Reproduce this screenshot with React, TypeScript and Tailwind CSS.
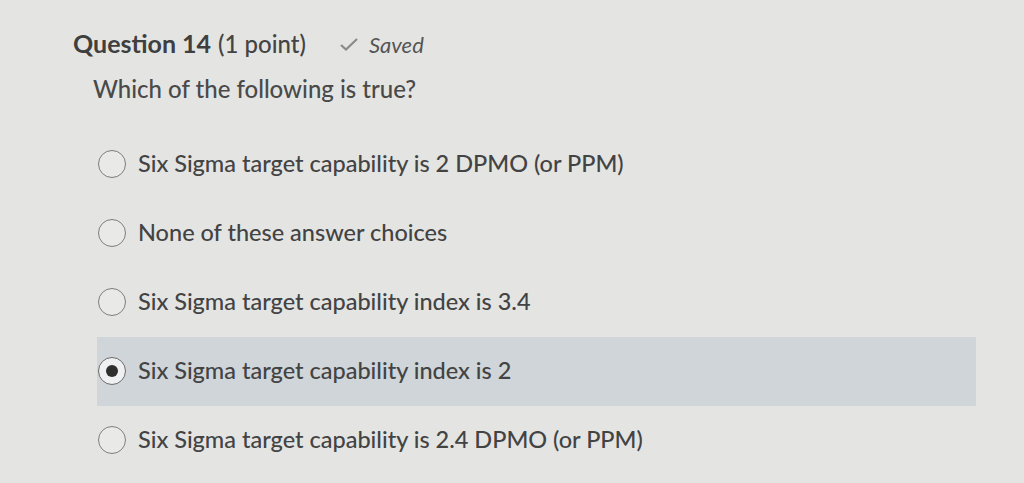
const options = [
  'Six Sigma target capability is 2 DPMO (or PPM)',
  'None of these answer choices',
  'Six Sigma target capability index is 3.4',
  'Six Sigma target capability index is 2',
  'Six Sigma target capability is 2.4 DPMO (or PPM)',
]

const selected = 3

function Radio({ checked }: { checked: boolean }) {
  return (
    <span
      className={`flex h-[28px] w-[28px] shrink-0 items-center justify-center rounded-full border-[1.5px] ${
        checked ? 'border-[#6b6b6b] bg-[#eef0f1]' : 'border-[#7d7d7d] bg-[#e9e9e7]'
      }`}
    >
      {checked && <span className="h-[12px] w-[12px] rounded-full bg-[#2f2f2f]" />}
    </span>
  )
}

export default function App() {
  return (
    <div
      className="h-[483px] w-[1024px] overflow-hidden bg-[#e4e5e3] text-[#474747]"
      style={{ fontFamily: 'Lato, "Open Sans", sans-serif' }}
    >
      <div className="pl-[73px] pt-[25px]">
        <div className="flex items-baseline">
          <span className="text-[25px] font-bold text-[#3f3f3f]">Question 14</span>
          <span className="ml-[7px] text-[24px] font-medium text-[#444]">(1 point)</span>
          <span className="ml-[33px] flex items-baseline text-[22px] italic text-[#555]">
            <svg width="20" height="15" viewBox="0 0 20 15" className="mr-[10px] self-center">
              <path d="M2 8 L7 12.5 L18 2" fill="none" stroke="#8a8a8a" strokeWidth="2.2" />
            </svg>
            Saved
          </span>
        </div>
        <div className="ml-[20px] mt-[8px] text-[24px] font-medium text-[#4a4a4a]">Which of the following is true?</div>
      </div>

      <div className="ml-[97px] mt-[23px] w-[879px]">
        {options.map((opt, i) => (
          <div
            key={opt}
            className={`flex h-[69px] items-center gap-[12px] pl-[1px] ${i === selected ? 'bg-[#cfd5d9]' : ''}`}
          >
            <Radio checked={i === selected} />
            <span className="text-[23.5px] font-medium text-[#434343]">{opt}</span>
          </div>
        ))}
      </div>
    </div>
  )
}
